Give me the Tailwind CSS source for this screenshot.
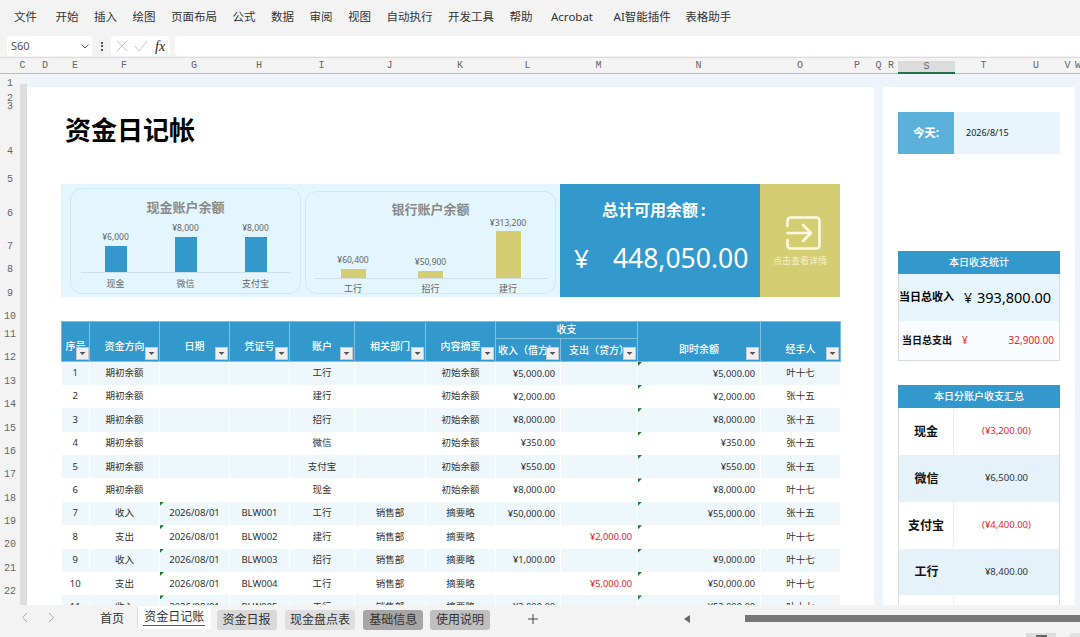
<!DOCTYPE html>
<html lang="zh-CN">

<head>
  <meta charset="UTF-8" />
  <title>资金日记帐</title>
  <script src="https://cdn.jsdelivr.net/npm/@tailwindcss/browser@4"></script>
</head>

<body class="w-[1080px] h-[637px] overflow-hidden bg-[#f3f3f3] text-[#333] font-['Noto_Sans','Noto_Sans_CJK_SC',sans-serif]">

  <!-- Menu -->
  <nav class="h-[33px] flex items-center gap-[15.5px] pl-[14px] text-[11.5px] text-[#333]">
    <span class="mr-[3px]">文件</span>
    <span>开始</span>
    <span>插入</span>
    <span>绘图</span>
    <span>页面布局</span>
    <span>公式</span>
    <span>数据</span>
    <span>审阅</span>
    <span>视图</span>
    <span>自动执行</span>
    <span>开发工具</span>
    <span>帮助</span>
    <span class="ml-[3px]">Acrobat</span>
    <span class="ml-[5px]">AI智能插件</span>
    <span class="-ml-[1px]">表格助手</span>
  </nav>

  <!-- Formula bar -->
  <div class="h-[25px] flex items-start pt-[3px] pl-[7px] border-b border-[#dcdcdc]">
    <div class="w-[85px] h-[20px] bg-white rounded-[4px] flex items-center justify-between pl-[4px] pr-[2px] text-[11px] text-[#555]">
      <span>S60</span>
      <svg class="w-[10px] h-[10px]" viewBox="0 0 10 10" fill="none" stroke="#555" stroke-width="1"><path d="M1.5 3.5 5 7l3.500-3.500" /></svg>
    </div>
    <div class="w-[19px] h-[20px] flex flex-col items-center justify-center gap-[1.5px]">
      <span class="w-[2px] h-[2px] bg-[#555]"></span>
      <span class="w-[2px] h-[2px] bg-[#555]"></span>
      <span class="w-[2px] h-[2px] bg-[#555]"></span>
    </div>
    <div class="w-[59px] h-[20px] bg-white rounded-[4px] flex items-center pl-[5px]">
      <svg class="w-[12px] h-[12px]" viewBox="0 0 12 12" fill="none" stroke="#c4c4c4" stroke-width="1"><path d="M1 1l10 10M11 1 1 11" /></svg>
      <svg class="w-[14px] h-[12px] ml-[6px]" viewBox="0 0 14 12" fill="none" stroke="#c4c4c4" stroke-width="1"><path d="M1 6l4 5 8-10" /></svg>
      <span class="ml-[7px] text-[14px] italic text-[#222] font-['Liberation_Serif',serif]">fx</span>
    </div>
    <div class="ml-[5px] flex-1 h-[20px] bg-white rounded-l-[4px]"></div>
  </div>

  <!-- Column letters -->
  <div class="h-[16px] flex text-[10px] text-[#666] font-['Liberation_Mono',monospace] border-b border-[#bdbdbd] leading-[15px] text-center">
    <div class="w-[16px]"></div>
    <div class="w-[13px]">C</div>
    <div class="w-[32px]">D</div>
    <div class="w-[28px]">E</div>
    <div class="w-[70px]">F</div>
    <div class="w-[70px]">G</div>
    <div class="w-[60px]">H</div>
    <div class="w-[65px]">I</div>
    <div class="w-[71px]">J</div>
    <div class="w-[70px]">K</div>
    <div class="w-[65px]">L</div>
    <div class="w-[77px]">M</div>
    <div class="w-[123px]">N</div>
    <div class="w-[80px]">O</div>
    <div class="w-[34px]">P</div>
    <div class="w-[9px]">Q</div>
    <div class="w-[15px] pl-[1px]">R</div>
    <div class="w-[57px] pt-[3px] h-[16px] leading-[11px] bg-[linear-gradient(#f3f3f3_3px,#dcdcdc_3px)] border-b-2 border-[#217346]">S</div>
    <div class="w-[57px]">T</div>
    <div class="w-[48px]">U</div>
    <div class="w-[15px]">V</div>
    <div class="w-[5px]">W</div>
  </div>

  <!-- Sheet -->
  <div class="h-[531px] flex overflow-hidden">
    <!-- Row numbers -->
    <div class="w-[20px] shrink-0 flex flex-col items-center pt-[1px] text-[10px] leading-[10px] text-[#666] font-['Liberation_Mono',monospace] [&>div]:flex [&>div]:items-end [&>div]:shrink-0">
      <div class="h-[14px]">1</div>
      <div class="h-[15px]">2</div>
      <div class="h-[8px]">3</div>
      <div class="h-[45px]">4</div>
      <div class="h-[28px]">5</div>
      <div class="h-[34px]">6</div>
      <div class="h-[33px]">7</div>
      <div class="h-[23px]">8</div>
      <div class="h-[24px]">9</div>
      <div class="h-[23px]">10</div>
      <div class="h-[18px]">11</div>
      <div class="h-[23px]">12</div>
      <div class="h-[24px]">13</div>
      <div class="h-[23px]">14</div>
      <div class="h-[24px]">15</div>
      <div class="h-[23px]">16</div>
      <div class="h-[23px]">17</div>
      <div class="h-[24px]">18</div>
      <div class="h-[23px]">19</div>
      <div class="h-[23px]">20</div>
      <div class="h-[24px]">21</div>
      <div class="h-[23px]">22</div>
    </div>

    <div class="flex-1 flex flex-col bg-[#eff3fb]">
      <div class="flex flex-1 pt-[13px] min-h-0">
        <div class="w-[7px] shrink-0 bg-[#dedede] -mt-[3px]"></div>

        <!-- Main page -->
        <main class="w-[847px] shrink-0 bg-white pl-[34px] pt-[27px] overflow-hidden">
          <h1 class="h-[32px] pl-[4px] text-[26px] leading-[32px] font-bold text-black">资金日记帐</h1>

          <!-- Dashboard -->
          <section class="mt-[38px] w-[779px] h-[113px] flex bg-[#e3f5fd]">
            <div class="ml-[9px] mt-[4px] w-[231px] h-[106px] rounded-[12px] border border-[#d0e8f3] flex flex-col items-center">
              <h2 class="mt-[9px] text-[13px] leading-[18px] font-bold text-[#8a8a8a]">现金账户余额</h2>
              <div class="w-[210px] h-[59px] mt-[-2px] flex items-end border-b border-[#cfdfe8] text-[8.5px] text-[#666] text-center">
                <div class="w-[70px] flex flex-col items-center"><span class="mb-[2px]">¥6,000</span><div class="w-[22px] h-[26px] bg-[#3398cc]"></div></div>
                <div class="w-[70px] flex flex-col items-center"><span class="mb-[2px]">¥8,000</span><div class="w-[22px] h-[35px] bg-[#3398cc]"></div></div>
                <div class="w-[70px] flex flex-col items-center"><span class="mb-[2px]">¥8,000</span><div class="w-[22px] h-[35px] bg-[#3398cc]"></div></div>
              </div>
              <div class="w-[210px] flex mt-[4px] text-[9px] text-[#666] text-center">
                <span class="w-[70px]">现金</span><span class="w-[70px]">微信</span><span class="w-[70px]">支付宝</span>
              </div>
            </div>

            <div class="ml-[4px] mt-[7px] w-[251px] h-[103px] rounded-[12px] border border-[#d0e8f3] flex flex-col items-center">
              <h2 class="mt-[8px] text-[13px] leading-[18px] font-bold text-[#8a8a8a]">银行账户余额</h2>
              <div class="w-[232px] h-[61px] flex items-end border-b border-[#cfdfe8] text-[8.5px] text-[#666] text-center">
                <div class="w-[77px] flex flex-col items-center"><span class="mb-[2px]">¥60,400</span><div class="w-[25px] h-[9px] bg-[#d4cd74]"></div></div>
                <div class="w-[78px] flex flex-col items-center"><span class="mb-[2px]">¥50,900</span><div class="w-[25px] h-[7px] bg-[#d4cd74]"></div></div>
                <div class="w-[77px] flex flex-col items-center"><span class="mb-[1px]">¥313,200</span><div class="w-[25px] h-[47px] bg-[#d4cd74]"></div></div>
              </div>
              <div class="w-[232px] flex mt-[3px] text-[9px] text-[#666] text-center">
                <span class="w-[77px]">工行</span><span class="w-[78px]">招行</span><span class="w-[77px]">建行</span>
              </div>
            </div>

            <div class="ml-[4px] w-[200px] bg-[#3398cc] text-white flex flex-col">
              <div class="mt-[15px] pl-[42px] text-[16px] leading-[22px] font-bold">总计可用余额<span class="ml-[3px]">:</span></div>
              <div class="mt-[19px] flex items-center leading-[36px] pl-[14px]">
                <span class="text-[26px]">¥</span>
                <span class="ml-[24px] text-[26.5px]">448,050.00</span>
              </div>
            </div>

            <div class="w-[80px] bg-[#d4cd74] flex flex-col items-center pt-[32px] text-[#f4f1c4]">
              <svg class="w-[35px] h-[34px] ml-[6px]" viewBox="0 0 35 34" fill="none" stroke="#fbf9e2" stroke-width="2.600" stroke-linecap="round" stroke-linejoin="round">
                <path d="M1.500 10V4.500a3 3 0 0 1 3-3h26a3 3 0 0 1 3 3v25a3 3 0 0 1-3 3h-26a3 3 0 0 1-3-3V24" />
                <path d="M1.500 17h23M17 9l8 8-8 8" />
              </svg>
              <span class="mt-[5px] text-[9px] leading-[12px]">点击查看详情</span>
            </div>
          </section>

          <!-- Ledger -->
          <table class="mt-[24px] w-[779px] table-fixed border-collapse text-[9.5px] text-center">
            <colgroup>
              <col class="w-[28px]" /><col class="w-[70px]" /><col class="w-[70px]" /><col class="w-[60px]" /><col class="w-[65px]" /><col class="w-[71px]" /><col class="w-[70px]" /><col class="w-[65px]" /><col class="w-[77px]" /><col class="w-[123px]" /><col class="w-[80px]" />
            </colgroup>
            <thead class="bg-[#3398cc] text-white text-[10px] [&_th]:relative [&_th]:align-top [&_th]:font-medium [&_th]:border [&_th]:border-[#7dc0e3] [&_th]:p-0">
              <tr class="h-[17px]">
                <th rowspan="2" class="pt-[17px]!"><span class="whitespace-nowrap">序号</span><span class="absolute right-[0px] bottom-[1px] w-[13px] h-[13px] bg-[#efefef] border border-[#c8c8c8] flex items-center justify-center"><i class="w-[6px] h-[3px] bg-[#555] [clip-path:polygon(0_0,100%_0,50%_100%)]"></i></span></th>
                <th rowspan="2" class="pt-[17px]!">资金方向<span class="absolute right-[1px] bottom-[1px] w-[13px] h-[13px] bg-[#efefef] border border-[#c8c8c8] flex items-center justify-center"><i class="w-[6px] h-[3px] bg-[#555] [clip-path:polygon(0_0,100%_0,50%_100%)]"></i></span></th>
                <th rowspan="2" class="pt-[17px]!">日期<span class="absolute right-[1px] bottom-[1px] w-[13px] h-[13px] bg-[#efefef] border border-[#c8c8c8] flex items-center justify-center"><i class="w-[6px] h-[3px] bg-[#555] [clip-path:polygon(0_0,100%_0,50%_100%)]"></i></span></th>
                <th rowspan="2" class="pt-[17px]!">凭证号<span class="absolute right-[1px] bottom-[1px] w-[13px] h-[13px] bg-[#efefef] border border-[#c8c8c8] flex items-center justify-center"><i class="w-[6px] h-[3px] bg-[#555] [clip-path:polygon(0_0,100%_0,50%_100%)]"></i></span></th>
                <th rowspan="2" class="pt-[17px]!">账户<span class="absolute right-[1px] bottom-[1px] w-[13px] h-[13px] bg-[#efefef] border border-[#c8c8c8] flex items-center justify-center"><i class="w-[6px] h-[3px] bg-[#555] [clip-path:polygon(0_0,100%_0,50%_100%)]"></i></span></th>
                <th rowspan="2" class="pt-[17px]!">相关部门<span class="absolute right-[1px] bottom-[1px] w-[13px] h-[13px] bg-[#efefef] border border-[#c8c8c8] flex items-center justify-center"><i class="w-[6px] h-[3px] bg-[#555] [clip-path:polygon(0_0,100%_0,50%_100%)]"></i></span></th>
                <th rowspan="2" class="pt-[17px]!">内容摘要<span class="absolute right-[1px] bottom-[1px] w-[13px] h-[13px] bg-[#efefef] border border-[#c8c8c8] flex items-center justify-center"><i class="w-[6px] h-[3px] bg-[#555] [clip-path:polygon(0_0,100%_0,50%_100%)]"></i></span></th>
                <th colspan="2">收支</th>
                <th rowspan="2" class="pt-[20px]!">即时余额<span class="absolute right-[1px] bottom-[1px] w-[13px] h-[13px] bg-[#efefef] border border-[#c8c8c8] flex items-center justify-center"><i class="w-[6px] h-[3px] bg-[#555] [clip-path:polygon(0_0,100%_0,50%_100%)]"></i></span></th>
                <th rowspan="2" class="pt-[20px]!">经手人<span class="absolute right-[1px] bottom-[1px] w-[13px] h-[13px] bg-[#efefef] border border-[#c8c8c8] flex items-center justify-center"><i class="w-[6px] h-[3px] bg-[#555] [clip-path:polygon(0_0,100%_0,50%_100%)]"></i></span></th>
              </tr>
              <tr class="h-[23px]">
                <th class="pt-[4px]! whitespace-nowrap overflow-hidden">收入（借方）<span class="absolute right-[1px] bottom-[1px] w-[13px] h-[13px] bg-[#efefef] border border-[#c8c8c8] flex items-center justify-center"><i class="w-[6px] h-[3px] bg-[#555] [clip-path:polygon(0_0,100%_0,50%_100%)]"></i></span></th>
                <th class="pt-[4px]! whitespace-nowrap overflow-hidden">支出（贷方）<span class="absolute right-[1px] bottom-[1px] w-[13px] h-[13px] bg-[#efefef] border border-[#c8c8c8] flex items-center justify-center"><i class="w-[6px] h-[3px] bg-[#555] [clip-path:polygon(0_0,100%_0,50%_100%)]"></i></span></th>
              </tr>
            </thead>
            <tbody class="[&_tr]:h-[23.4px] [&_tr:nth-child(odd)]:bg-[#edf7fc] [&_td]:relative [&_td]:p-0 [&_td]:border-r [&_td]:border-white [&_td:nth-child(8)]:text-right [&_td:nth-child(8)]:pr-[5px] [&_td:nth-child(8)]:text-[9.25px] [&_td:nth-child(9)]:text-right [&_td:nth-child(9)]:pr-[5px] [&_td:nth-child(9)]:text-[9.25px] [&_td:nth-child(10)]:text-right [&_td:nth-child(10)]:pr-[5px] [&_td:nth-child(10)]:text-[9.25px]">
              <tr><td>1</td><td>期初余额</td><td></td><td></td><td>工行</td><td></td><td>初始余额</td><td>¥5,000.00</td><td></td><td><i class="absolute left-0 top-0 w-[4px] h-[4px] bg-[#1e7a2e] [clip-path:polygon(0_0,100%_0,0_100%)]"></i>¥5,000.00</td><td>叶十七</td></tr>
              <tr><td>2</td><td>期初余额</td><td></td><td></td><td>建行</td><td></td><td>初始余额</td><td>¥2,000.00</td><td></td><td><i class="absolute left-0 top-0 w-[4px] h-[4px] bg-[#1e7a2e] [clip-path:polygon(0_0,100%_0,0_100%)]"></i>¥2,000.00</td><td>张十五</td></tr>
              <tr><td>3</td><td>期初余额</td><td></td><td></td><td>招行</td><td></td><td>初始余额</td><td>¥8,000.00</td><td></td><td><i class="absolute left-0 top-0 w-[4px] h-[4px] bg-[#1e7a2e] [clip-path:polygon(0_0,100%_0,0_100%)]"></i>¥8,000.00</td><td>张十五</td></tr>
              <tr><td>4</td><td>期初余额</td><td></td><td></td><td>微信</td><td></td><td>初始余额</td><td>¥350.00</td><td></td><td><i class="absolute left-0 top-0 w-[4px] h-[4px] bg-[#1e7a2e] [clip-path:polygon(0_0,100%_0,0_100%)]"></i>¥350.00</td><td>张十五</td></tr>
              <tr><td>5</td><td>期初余额</td><td></td><td></td><td>支付宝</td><td></td><td>初始余额</td><td>¥550.00</td><td></td><td><i class="absolute left-0 top-0 w-[4px] h-[4px] bg-[#1e7a2e] [clip-path:polygon(0_0,100%_0,0_100%)]"></i>¥550.00</td><td>张十五</td></tr>
              <tr><td>6</td><td>期初余额</td><td></td><td></td><td>现金</td><td></td><td>初始余额</td><td>¥8,000.00</td><td></td><td><i class="absolute left-0 top-0 w-[4px] h-[4px] bg-[#1e7a2e] [clip-path:polygon(0_0,100%_0,0_100%)]"></i>¥8,000.00</td><td>叶十七</td></tr>
              <tr><td>7</td><td>收入</td><td><i class="absolute left-0 top-0 w-[4px] h-[4px] bg-[#1e7a2e] [clip-path:polygon(0_0,100%_0,0_100%)]"></i>2026/08/01</td><td>BLW001</td><td>工行</td><td>销售部</td><td>摘要略</td><td>¥50,000.00</td><td></td><td><i class="absolute left-0 top-0 w-[4px] h-[4px] bg-[#1e7a2e] [clip-path:polygon(0_0,100%_0,0_100%)]"></i>¥55,000.00</td><td>张十五</td></tr>
              <tr><td>8</td><td>支出</td><td><i class="absolute left-0 top-0 w-[4px] h-[4px] bg-[#1e7a2e] [clip-path:polygon(0_0,100%_0,0_100%)]"></i>2026/08/01</td><td>BLW002</td><td>建行</td><td>销售部</td><td>摘要略</td><td></td><td class="text-[#e8212b]">¥2,000.00</td><td><i class="absolute left-0 top-0 w-[4px] h-[4px] bg-[#1e7a2e] [clip-path:polygon(0_0,100%_0,0_100%)]"></i></td><td>叶十七</td></tr>
              <tr><td>9</td><td>收入</td><td><i class="absolute left-0 top-0 w-[4px] h-[4px] bg-[#1e7a2e] [clip-path:polygon(0_0,100%_0,0_100%)]"></i>2026/08/01</td><td>BLW003</td><td>招行</td><td>销售部</td><td>摘要略</td><td>¥1,000.00</td><td></td><td><i class="absolute left-0 top-0 w-[4px] h-[4px] bg-[#1e7a2e] [clip-path:polygon(0_0,100%_0,0_100%)]"></i>¥9,000.00</td><td>叶十七</td></tr>
              <tr><td>10</td><td>支出</td><td><i class="absolute left-0 top-0 w-[4px] h-[4px] bg-[#1e7a2e] [clip-path:polygon(0_0,100%_0,0_100%)]"></i>2026/08/01</td><td>BLW004</td><td>工行</td><td>销售部</td><td>摘要略</td><td></td><td class="text-[#e8212b]">¥5,000.00</td><td><i class="absolute left-0 top-0 w-[4px] h-[4px] bg-[#1e7a2e] [clip-path:polygon(0_0,100%_0,0_100%)]"></i>¥50,000.00</td><td>叶十七</td></tr>
              <tr><td>11</td><td>收入</td><td><i class="absolute left-0 top-0 w-[4px] h-[4px] bg-[#1e7a2e] [clip-path:polygon(0_0,100%_0,0_100%)]"></i>2026/08/01</td><td>BLW005</td><td>工行</td><td>销售部</td><td>摘要略</td><td>¥3,000.00</td><td></td><td><i class="absolute left-0 top-0 w-[4px] h-[4px] bg-[#1e7a2e] [clip-path:polygon(0_0,100%_0,0_100%)]"></i>¥53,000.00</td><td>叶十七</td></tr>
            </tbody>
          </table>
        </main>

        <!-- Right panel -->
        <aside class="ml-[9px] w-[192px] shrink-0 bg-white pl-[15px] pt-[25px] overflow-hidden">
          <div class="w-[162px] h-[42px] flex">
            <div class="w-[56px] bg-[#5bb1d9] text-white text-[11.5px] font-bold flex items-center justify-center">今天:</div>
            <div class="flex-1 bg-[#e8f5fc] flex items-center pl-[12px] text-[#222] text-[9px]">2026/8/15</div>
          </div>

          <div class="mt-[97px] w-[162px] h-[110px] border border-t-0 border-[#dadada] flex flex-col">
            <div class="h-[23px] bg-[#3398cc] text-white text-[10px] font-medium flex items-center justify-center -mx-px">本日收支统计</div>
            <div class="h-[47px] bg-[#e6f4fb] flex items-center text-black">
              <span class="w-[56px] text-[11px] font-bold whitespace-nowrap">当日总收入</span>
              <span class="ml-[9px] text-[14px]">¥</span>
              <span class="ml-[5px] text-[14.500px] whitespace-nowrap">393,800.00</span>
            </div>
            <div class="flex-1 bg-[#f8fcfe] flex items-center text-[#e8212b] text-[10px] pr-[5px]">
              <span class="ml-[3px] w-[60px] text-[#111] font-bold whitespace-nowrap">当日总支出</span>
              <span>¥</span>
              <span class="ml-auto">32,900.00</span>
            </div>
          </div>

          <div class="mt-[24px] w-[162px] border-x border-[#dadada]">
            <div class="h-[23px] bg-[#3398cc] text-white text-[10px] font-medium flex items-center justify-center -mx-px">本日分账户收支汇总</div>
            <div class="h-[47px] flex items-center text-[9.5px]">
              <div class="w-[55px] h-full flex items-center justify-center text-[12px] font-bold text-[#111] border-r border-[#efefef]">现金</div>
              <div class="flex-1 text-center text-[#e8212b]">(¥3,200.00)</div>
            </div>
            <div class="h-[47px] flex items-center text-[9.5px] bg-[#e6f2fa]">
              <div class="w-[55px] h-full flex items-center justify-center text-[12px] font-bold text-[#111]">微信</div>
              <div class="flex-1 text-center">¥6,500.00</div>
            </div>
            <div class="h-[47px] flex items-center text-[9.5px]">
              <div class="w-[55px] h-full flex items-center justify-center text-[12px] font-bold text-[#111] border-r border-[#efefef]">支付宝</div>
              <div class="flex-1 text-center text-[#e8212b]">(¥4,400.00)</div>
            </div>
            <div class="h-[46px] flex items-center text-[9.5px] bg-[#e6f2fa]">
              <div class="w-[55px] h-full flex items-center justify-center text-[12px] font-bold text-[#111]">工行</div>
              <div class="flex-1 text-center">¥8,400.00</div>
            </div>
            <div class="h-[47px] flex">
              <div class="w-[55px] border-r border-[#efefef]"></div>
            </div>
          </div>
        </aside>
      </div>
    </div>
  </div>

  <!-- Sheet tabs -->
  <footer class="h-[32px] relative">
    <div class="h-[25px] flex items-center text-[12px] text-[#333]">
      <svg class="ml-[21px] w-[7px] h-[11px]" viewBox="0 0 7 11" fill="none" stroke="#aaa" stroke-width="1"><path d="M6 1 1.500 5.500 6 10" /></svg>
      <svg class="ml-[20px] w-[7px] h-[11px]" viewBox="0 0 7 11" fill="none" stroke="#aaa" stroke-width="1"><path d="M1 1l4.500 4.500L1 10" /></svg>
      <span class="ml-[42px] w-[41px] pl-[3px] pt-[3px] border-r border-[#dcdcdc]">首页</span>
      <span class="w-[73px] h-[23px] bg-white flex flex-col items-center pt-[2px]"><span class="leading-[17px] border-b border-[#217346] px-[1px]">资金日记账</span></span>
      <span class="ml-[6px] w-[60px] h-[20px] mt-[4px] rounded-[3px] bg-[#d9d9d9] flex items-center justify-center">资金日报</span>
      <span class="ml-[8px] w-[71px] h-[20px] mt-[4px] rounded-[3px] bg-[#dedede] flex items-center justify-center">现金盘点表</span>
      <span class="ml-[8px] w-[60px] h-[20px] mt-[4px] rounded-[3px] bg-[#a6a6a6] flex items-center justify-center">基础信息</span>
      <span class="ml-[7px] w-[60px] h-[20px] mt-[4px] rounded-[3px] bg-[#bfbfbf] flex items-center justify-center">使用说明</span>
      <svg class="ml-[38px] mt-[3px] w-[10px] h-[10px]" viewBox="0 0 10 10" fill="none" stroke="#444" stroke-width="1"><path d="M5 0v10M0 5h10" /></svg>
      <svg class="ml-[146px] mt-[3px] w-[6px] h-[8px]" viewBox="0 0 6 8" fill="#666"><path d="M6 0v8L0 4z" /></svg>
      <span class="ml-[55px] mt-[2px] w-[335px] h-[7px] bg-[#777] shrink-0"></span>
    </div>
    <div class="absolute left-[1026px] bottom-0 flex gap-[14px]">
      <span class="w-[30px] h-[4px] bg-[#dcdcdc] flex justify-center pt-[2px]"><i class="w-[11px] h-[2px] bg-[#666]"></i></span>
      <span class="w-[10px] h-[4px] bg-[#e0e0e0]"></span>
    </div>
  </footer>

</body>

</html>
